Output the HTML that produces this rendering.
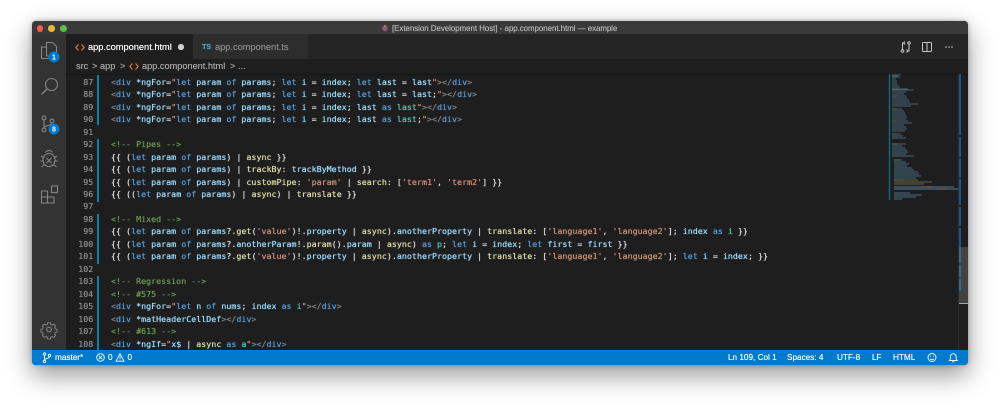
<!DOCTYPE html>
<html><head><meta charset="utf-8"><style>
html,body{margin:0;padding:0;background:#fff;width:1000px;height:408px;overflow:hidden}
*{box-sizing:border-box}
#w{position:absolute;left:32px;top:21px;width:936px;height:344px;border-radius:4px;background:#1e1e1e;box-shadow:0 10px 26px rgba(0,0,0,.42),0 0 5px rgba(0,0,0,.3);overflow:hidden}
.p{position:absolute}
.s{font-family:"Liberation Sans",sans-serif;white-space:nowrap;text-shadow:0 0 .4px currentColor}
#code{position:absolute;left:111px;top:75.8px;font:8.33px/12.47px "DejaVu Sans Mono","Liberation Mono",monospace;color:#dedede;white-space:pre;text-shadow:0 0 .6px currentColor}
#nums{position:absolute;left:60px;width:33.3px;top:75.8px;text-align:right;font:8.33px/12.47px "DejaVu Sans Mono","Liberation Mono",monospace;color:#8c8c8c;white-space:pre;text-shadow:0 0 .4px currentColor}
i{font-style:normal}
.g{color:#808080}.b{color:#569cd6}.l{color:#9cdcfe}.o{color:#ce9178}.t{color:#4ec9b0}.y{color:#dcdcaa}.c{color:#6a9955}
.st{position:absolute;left:97px;width:2.2px;background:#0a80aa}
.stat{position:absolute;top:350px;height:15px;font:8.2px/15px "Liberation Sans",sans-serif;color:#fff;white-space:nowrap;text-shadow:0 0 .4px #fff}
.r{position:absolute;left:958px;width:3px;background:#0f5a8c}
.bc{top:60px;line-height:13px;font-size:9.2px;color:#a6a6a6}
</style></head><body>
<div id="w"></div>
<div class="p" style="left:32px;top:21px;width:936px;height:13px;background:#3a3a3a;border-radius:4px 4px 0 0"></div>
<div class="p" style="left:36.7px;top:25px;width:6.6px;height:6.6px;border-radius:50%;background:#f25c54"></div>
<div class="p" style="left:48.4px;top:25px;width:6.6px;height:6.6px;border-radius:50%;background:#e7b93b"></div>
<div class="p" style="left:60px;top:25px;width:6.6px;height:6.6px;border-radius:50%;background:#5fbb46"></div>
<svg class="p" style="left:381px;top:24px" width="8" height="9"><circle cx="4" cy="4.5" r="2.8" fill="#8a5a7a"/><rect x="3" y="1" width="2" height="2" fill="#c9704f"/></svg>
<div class="p s" style="left:392px;top:22px;line-height:13px;font-size:7.85px;color:#b4b4b4">[Extension Development Host] - app.component.html — example</div>

<div class="p" style="left:32px;top:34px;width:34px;height:316px;background:#333"></div>
<div class="p" style="left:66px;top:34px;width:902px;height:25px;background:#252526"></div>
<div class="p" style="left:66px;top:34px;width:127px;height:25px;background:#1e1e1e"></div>
<div class="p" style="left:193px;top:34px;width:115px;height:25px;background:#2d2d2d"></div>
<div class="p" style="left:66px;top:73.5px;width:902px;height:1.5px;background:#111;opacity:.7"></div>

<svg class="p" style="left:75px;top:43px" width="10" height="9" fill="none" stroke="#e37933" stroke-width="1.2"><path d="M3.5 1.5L.8 4.5l2.7 3M6.5 1.5l2.7 3-2.7 3"/></svg>
<div class="p s" style="left:88px;top:40px;line-height:14px;font-size:9.25px;color:#fff">app.component.html</div>
<div class="p" style="left:178px;top:44px;width:5.5px;height:5.5px;border-radius:50%;background:#d0d0d0"></div>
<div class="p s" style="left:202px;top:41px;line-height:12px;font-size:7.2px;font-weight:bold;color:#519aba">TS</div>
<div class="p s" style="left:215px;top:40px;line-height:14px;font-size:9.25px;color:#8b8b8b">app.component.ts</div>

<svg class="p" style="left:898px;top:40px" width="60" height="15" fill="none" stroke="#c5c5c5" stroke-width="1">
<path d="M6.5 3H4.5v6.5M9 11h2V4.5"/><circle cx="4.5" cy="11" r="1.3"/><circle cx="11" cy="3" r="1.3"/><path d="M7 1.5L5.5 3 7 4.5M8.5 9.5L10 11l-1.5 1.5"/>
<rect x="24.5" y="2.5" width="9" height="9" rx="1"/><path d="M29 2.5v9"/>
<circle cx="48" cy="7" r=".8" fill="#c5c5c5" stroke="none"/><circle cx="51" cy="7" r=".8" fill="#c5c5c5" stroke="none"/><circle cx="54" cy="7" r=".8" fill="#c5c5c5" stroke="none"/></svg>

<div class="p s bc" style="left:76px">src</div>
<div class="p s bc" style="left:92px">&gt;</div>
<div class="p s bc" style="left:100px">app</div>
<div class="p s bc" style="left:120px">&gt;</div>
<svg class="p" style="left:129px;top:62px" width="10" height="9" fill="none" stroke="#e37933" stroke-width="1.1"><path d="M3.5 1.5L.8 4.5l2.7 3M6.5 1.5l2.7 3-2.7 3"/></svg>
<div class="p s bc" style="left:142px">app.component.html</div>
<div class="p s bc" style="left:230px">&gt;</div>
<div class="p s bc" style="left:238px">...</div>

<svg class="p" style="left:32px;top:34px" width="34" height="316" fill="none" stroke="#858585" stroke-width="1.1">
<path d="M14.5 8.5h6l4 4V22h-10z"/><path d="M14.5 13H9.5v11.5h9V22"/>
<circle cx="19.5" cy="50.5" r="6"/><path d="M15 55l-5.5 5.5" stroke-width="1.4"/>
<circle cx="12" cy="84" r="1.9"/><circle cx="12" cy="96" r="1.9"/><circle cx="20" cy="87" r="1.9"/><path d="M12 86v8M20 89c0 3-8 2-8 5"/>
<ellipse cx="17" cy="126" rx="6" ry="6.5"/><path d="M13.5 118.5a4 4 0 017 0M9 122l3 2M25 122l-3 2M8.5 127h3M25.5 127h-3M9.5 133l3-2.5M24.5 133l-3-2.5M14.5 124l5 5M19.5 124l-5 5"/>
<path d="M9.5 157h6v6h-6zM9.5 163h6v6h-6zM15.5 163h6.5v6h-6.5z"/><rect x="19.5" y="152" width="6" height="6.5"/>
<circle cx="17" cy="295.5" r="2.3"/><path transform="translate(17 295.5) scale(.85) translate(-17 -295.5)" d="M15.4 287.5h3.2l.4 2 1.8.8 1.8-1.1 2.2 2.2-1.1 1.8.8 1.8 2 .4v3.2l-2 .4-.8 1.8 1.1 1.8-2.2 2.2-1.8-1.1-1.8.8-.4 2h-3.2l-.4-2-1.8-.8-1.8 1.1-2.2-2.2 1.1-1.8-.8-1.8-2-.4v-3.2l2-.4.8-1.8-1.1-1.8 2.2-2.2 1.8 1.1 1.8-.8z"/>
<circle cx="22" cy="23" r="5.5" fill="#007acc" stroke="none"/><circle cx="22" cy="95" r="5.5" fill="#007acc" stroke="none"/>
<text x="22" y="25.7" font-family="Liberation Sans" font-weight="bold" font-size="7" fill="#fff" stroke="none" text-anchor="middle">1</text>
<text x="22" y="97.7" font-family="Liberation Sans" font-weight="bold" font-size="7" fill="#fff" stroke="none" text-anchor="middle">8</text>
</svg>

<div class="st" style="top:75px;height:50px"></div>
<div class="st" style="top:139px;height:63px"></div>
<div class="st" style="top:214px;height:50px"></div>
<div class="st" style="top:276px;height:74px"></div>

<div id="nums">87
88
89
90
91
92
93
94
95
96
97
98
99
100
101
102
103
104
105
106
107
108</div>
<div id="code"><i class="g">&lt;</i><i class="b">div</i> <i class="l">*ngFor</i>=<i class="o">"</i><i class="b">let</i> <i class="l">param</i> <i class="b">of</i> <i class="l">params</i>; <i class="b">let</i> <i class="l">i</i> = <i class="l">index</i>; <i class="b">let</i> <i class="l">last</i> = <i class="l">last</i><i class="o">"</i><i class="g">&gt;&lt;/</i><i class="b">div</i><i class="g">&gt;</i>
<i class="g">&lt;</i><i class="b">div</i> <i class="l">*ngFor</i>=<i class="o">"</i><i class="b">let</i> <i class="l">param</i> <i class="b">of</i> <i class="l">params</i>; <i class="b">let</i> <i class="l">i</i> = <i class="l">index</i>; <i class="b">let</i> <i class="l">last</i> = <i class="l">last</i>;<i class="o">"</i><i class="g">&gt;&lt;/</i><i class="b">div</i><i class="g">&gt;</i>
<i class="g">&lt;</i><i class="b">div</i> <i class="l">*ngFor</i>=<i class="o">"</i><i class="b">let</i> <i class="l">param</i> <i class="b">of</i> <i class="l">params</i>; <i class="b">let</i> <i class="l">i</i> = <i class="l">index</i>; <i class="l">last</i> <i class="b">as</i> <i class="t">last</i><i class="o">"</i><i class="g">&gt;&lt;/</i><i class="b">div</i><i class="g">&gt;</i>
<i class="g">&lt;</i><i class="b">div</i> <i class="l">*ngFor</i>=<i class="o">"</i><i class="b">let</i> <i class="l">param</i> <i class="b">of</i> <i class="l">params</i>; <i class="b">let</i> <i class="l">i</i> = <i class="l">index</i>; <i class="l">last</i> <i class="b">as</i> <i class="t">last</i>;<i class="o">"</i><i class="g">&gt;&lt;/</i><i class="b">div</i><i class="g">&gt;</i>

<i class="c">&lt;!-- Pipes --&gt;</i>
{{ (<i class="b">let</i> <i class="l">param</i> <i class="b">of</i> <i class="l">params</i>) | <i class="y">async</i> }}
{{ (<i class="b">let</i> <i class="l">param</i> <i class="b">of</i> <i class="l">params</i>) | <i class="y">trackBy</i>: <i class="l">trackByMethod</i> }}
{{ (<i class="b">let</i> <i class="l">param</i> <i class="b">of</i> <i class="l">params</i>) | <i class="y">customPipe</i>: <i class="o">'param'</i> | <i class="y">search</i>: [<i class="o">'term1'</i>, <i class="o">'term2'</i>] }}
{{ ((<i class="b">let</i> <i class="l">param</i> <i class="b">of</i> <i class="l">params</i>) | <i class="y">async</i>) | <i class="y">translate</i> }}

<i class="c">&lt;!-- Mixed --&gt;</i>
{{ (<i class="b">let</i> <i class="l">param</i> <i class="b">of</i> <i class="l">params</i>?.<i class="y">get</i>(<i class="o">'value'</i>)!.<i class="l">property</i> | <i class="y">async</i>).<i class="l">anotherProperty</i> | <i class="y">translate</i>: [<i class="o">'language1'</i>, <i class="o">'language2'</i>]; <i class="l">index</i> <i class="b">as</i> <i class="t">i</i> }}
{{ (<i class="b">let</i> <i class="l">param</i> <i class="b">of</i> <i class="l">params</i>?.<i class="l">anotherParam</i>!.<i class="y">param</i>().<i class="l">param</i> | <i class="y">async</i>) <i class="b">as</i> <i class="t">p</i>; <i class="b">let</i> <i class="l">i</i> = <i class="l">index</i>; <i class="b">let</i> <i class="l">first</i> = <i class="l">first</i> }}
{{ (<i class="b">let</i> <i class="l">param</i> <i class="b">of</i> <i class="l">params</i>?.<i class="y">get</i>(<i class="o">'value'</i>)!.<i class="l">property</i> | <i class="y">async</i>).<i class="l">anotherProperty</i> | <i class="y">translate</i>: [<i class="o">'language1'</i>, <i class="o">'language2'</i>]; <i class="b">let</i> <i class="l">i</i> = <i class="l">index</i>; }}

<i class="c">&lt;!-- Regression --&gt;</i>
<i class="c">&lt;!-- #575 --&gt;</i>
<i class="g">&lt;</i><i class="b">div</i> <i class="l">*ngFor</i>=<i class="o">"</i><i class="b">let</i> <i class="l">n</i> <i class="b">of</i> <i class="l">nums</i>; <i class="l">index</i> <i class="b">as</i> <i class="t">i</i><i class="o">"</i><i class="g">&gt;&lt;/</i><i class="b">div</i><i class="g">&gt;</i>
<i class="g">&lt;</i><i class="b">div</i> <i class="l">*matHeaderCellDef</i><i class="g">&gt;&lt;/</i><i class="b">div</i><i class="g">&gt;</i>
<i class="c">&lt;!-- #613 --&gt;</i>
<i class="g">&lt;</i><i class="b">div</i> <i class="l">*ngIf</i>=<i class="o">"</i><i class="l">x$</i> | <i class="y">async</i> <i class="b">as</i> <i class="t">a</i><i class="o">"</i><i class="g">&gt;&lt;/</i><i class="b">div</i><i class="g">&gt;</i></div>

<svg class="p" style="left:885px;top:70px;filter:blur(.35px)" width="75" height="135" fill="none" stroke-width="1">
<path stroke="#0e6a80" stroke-width="1.4" d="M4.5 4v126"/>
<path stroke="#4f7590" opacity=".8" d="M7 5h9M7 7h8M7 9h4M7 11h5M7 13h5M7 15h6M7 17h8M7 19h16M7 20h22M7 22h14M7 24h12M7 26h14M7 28h15M7 30h17M7 32h18M7 34h26M7 36h19M7 39h10M7 41h12M7 43h13M7 45h14M7 47h15M7 49h14M7 51h16M7 53h20M7 55h12M7 57h14M7 59h15M7 61h13M7 64h9M7 66h11M7 68h14"/>
<path stroke="#7d7f62" opacity=".55" d="M7 6h6M7 19h6M7 26h5M7 39h5M7 51h4M7 64h5"/>
<path stroke="#4f7590" opacity=".85" d="M7 74h14M7 76h10M7 78h13M7 80h15M7 82h16M7 84h14M7 86h22M9 90h8M9 92h12M9 94h15M9 96h13M9 98h18M9 100h20M9 102h24M9 104h25M9 106h27M9 108h22"/>
<path stroke="#6a8f5f" opacity=".7" d="M7 74h6M9 90h6M9 110h10"/>
<path stroke="#7d7f62" opacity=".75" d="M9 110h24M9 112h38M9 114h30"/>
<path stroke="#5f8db0" opacity=".85" d="M9 117h60M9 119h70"/>
<path stroke="#a97a63" opacity=".8" d="M36 117h12M52 119h9"/>
<path stroke="#5f8db0" opacity=".7" d="M9 123h16M9 125h28M9 127h22M9 129h8"/>
</svg>

<div class="r" style="top:74px;height:61px"></div>
<div class="r" style="top:137px;height:20px"></div>
<div class="r" style="top:158px;height:20px"></div>
<div class="r" style="top:179px;height:26px"></div>
<div class="r" style="top:207px;height:19px"></div>
<div class="r" style="top:228px;height:35px"></div>
<div class="r" style="top:265px;height:12px"></div>
<div class="r" style="top:279px;height:12px"></div>
<div class="p" style="left:958px;top:247px;width:10px;height:56px;background:rgba(121,121,121,.4)"></div>
<div class="p" style="left:958px;top:302.5px;width:10px;height:1px;background:#aaa"></div>
<div class="p" style="left:958px;top:74px;width:.5px;height:276px;background:#2c2c2c"></div>

<div class="p" style="left:32px;top:350px;width:936px;height:15px;background:#007acc;border-radius:0 0 4px 4px"></div>
<svg class="p" style="left:42px;top:352px" width="10" height="12" fill="none" stroke="#fff" stroke-width=".9"><circle cx="2.5" cy="2" r="1.2"/><circle cx="2.5" cy="9.5" r="1.2"/><circle cx="7.5" cy="3.5" r="1.2"/><path d="M2.5 3.2v5M7.5 4.7c0 2-5 1.5-5 3.5"/></svg>
<div class="stat" style="left:55px">master*</div>
<svg class="p" style="left:95px;top:352px" width="32" height="11" fill="none" stroke="#fff" stroke-width=".9"><circle cx="5.5" cy="5.5" r="3.8"/><path d="M3.7 3.7l3.6 3.6M7.3 3.7L3.7 7.3"/><path d="M29 9.2h-8L25 1.8zM25 4.2v2.6M25 7.6v.6"/></svg>
<div class="stat" style="left:108px">0</div>
<div class="stat" style="left:127.5px">0</div>
<div class="stat" style="left:728px">Ln 109, Col 1</div>
<div class="stat" style="left:787px">Spaces: 4</div>
<div class="stat" style="left:837px">UTF-8</div>
<div class="stat" style="left:872px">LF</div>
<div class="stat" style="left:893px">HTML</div>
<svg class="p" style="left:926px;top:352px" width="34" height="12" fill="none" stroke="#fff" stroke-width=".9"><circle cx="6" cy="5.5" r="4"/><path d="M4 6.8c1 1 3 1 4 0M4.3 4.3h.8M7 4.3h.8"/><path d="M23.5 8.5c1-1 1-2 1-4a2.8 2.8 0 015.6 0c0 2 0 3 1 4zM26 9.8h2.6"/></svg>
</body></html>
